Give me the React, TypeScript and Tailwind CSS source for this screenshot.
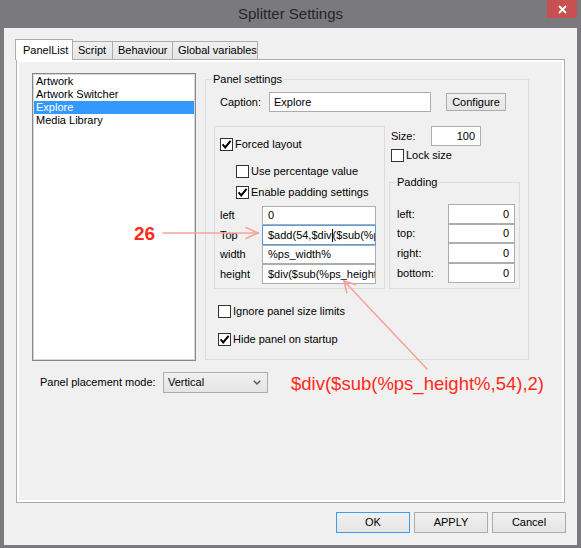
import React from "react";

function Check({ checked }: { checked?: boolean }) {
  return (
    <div className="w-[13px] h-[13px] border border-[#333333] bg-white flex items-center justify-center shrink-0">
      {checked && (
        <svg width="11" height="11" viewBox="0 0 11 11">
          <path d="M1.6 5.4 L4.2 8.4 L9.6 1.8" stroke="#000" strokeWidth="2" fill="none" />
        </svg>
      )}
    </div>
  );
}

function CheckRow({ checked, label, cls }: { checked?: boolean; label: string; cls: string }) {
  return (
    <div className={cls}>
      <Check checked={checked} />
      <span className="ml-[2px] whitespace-nowrap">{label}</span>
    </div>
  );
}

export default function App() {
  return (
    <div className="relative w-[581px] h-[548px] bg-[#7a797e] flex flex-col overflow-hidden font-['Liberation_Sans',Arial,sans-serif] text-[11px] leading-[13px] text-black">
      {/* title bar */}
      <div className="h-[28px] shrink-0 grid grid-cols-[1fr_auto_1fr]">
        <div />
        <div className="pt-[5px] text-[15px] leading-[17px] text-[#262626] whitespace-nowrap">Splitter Settings</div>
        <div className="flex justify-end items-start pr-[4px]">
          <div className="w-[30px] h-[18px] bg-[#c75050] flex items-center justify-center">
            <svg width="9" height="9" viewBox="0 0 9 9">
              <path d="M1 1 L8 8 M8 1 L1 8" stroke="#ffffff" strokeWidth="1.8" />
            </svg>
          </div>
        </div>
      </div>

      {/* client area */}
      <div className="mx-[4px] h-[517px] bg-[#f0f0f0] flex flex-col px-[11px]">
        {/* tabs */}
        <div className="mt-[11px] h-[20px] flex items-end relative z-10">
          <div className="w-[58px] h-[21px] -mb-[1px] bg-white border border-b-0 border-[#acacac] pl-[7px] flex items-center whitespace-nowrap">
            PanelList
          </div>
          <div className="w-[40px] h-[18px] bg-linear-to-b from-[#f0f0f0] to-[#e5e5e5] border-t border-r border-[#acacac] pl-[5px] flex items-center whitespace-nowrap">
            Script
          </div>
          <div className="w-[60px] h-[18px] bg-linear-to-b from-[#f0f0f0] to-[#e5e5e5] border-t border-r border-[#acacac] pl-[5px] flex items-center whitespace-nowrap">
            Behaviour
          </div>
          <div className="w-[85px] h-[18px] bg-linear-to-b from-[#f0f0f0] to-[#e5e5e5] border-t border-r border-[#acacac] pl-[5px] flex items-center whitespace-nowrap overflow-hidden">
            Global variables
          </div>
        </div>

        {/* tab panel */}
        <div className="mx-[1px] h-[444px] border border-[#acacac] bg-white p-[2px] flex">
          <div className="flex-1 bg-[#f0f0f0] pt-[11px] pl-[13px] flex flex-col">
            <div className="flex items-start">
              {/* list box */}
              <div className="w-[164px] h-[288px] border border-[#828790] bg-white p-[1px] shadow-[inset_0_0_0_1px_#d9d9d9] flex flex-col">
                <div className="h-[13px] pl-[2px]">Artwork</div>
                <div className="h-[13px] pl-[2px]">Artwork Switcher</div>
                <div className="h-[13px] pl-[2px] bg-[#3399ff] text-white">Explore</div>
                <div className="h-[13px] pl-[2px]">Media Library</div>
              </div>

              {/* Panel settings group */}
              <div className="ml-[9px] mt-[6px] w-[324px] h-[281px] border border-[#dcdcdc] flex flex-col">
                <div className="-mt-[7px] ml-[6px] px-[1px] bg-[#f0f0f0] w-fit">Panel settings</div>

                <div className="mt-[6px] h-[20px] flex items-center">
                  <div className="ml-[14px] w-[49px]">Caption:</div>
                  <div className="w-[162px] h-[20px] border border-[#abadb3] bg-white pl-[4px] flex items-center">Explore</div>
                  <div className="ml-[15px] w-[60px] h-[18px] border border-[#acacac] bg-linear-to-b from-[#f0f0f0] to-[#e5e5e5] flex items-center justify-center">
                    Configure
                  </div>
                </div>

                <div className="mt-[14px] ml-[8px] flex items-start">
                  {/* left box */}
                  <div className="w-[171px] h-[163px] border border-[#dcdcdc] flex flex-col pl-[5px] pt-[11px]">
                    <CheckRow checked label="Forced layout" cls="flex items-center h-[13px]" />
                    <CheckRow label="Use percentage value" cls="mt-[14px] ml-[16px] flex items-center h-[13px]" />
                    <CheckRow checked label="Enable padding settings" cls="mt-[8px] ml-[16px] flex items-center h-[13px]" />
                    <div className="mt-[7px] grid grid-cols-[42px_114px]">
                      <div className="h-[19px] flex items-center">left</div>
                      <div className="h-[19px] border border-[#abadb3] bg-white pl-[5px] flex items-center">0</div>
                      <div className="h-[20px] flex items-center">Top</div>
                      <div className="h-[20px] border border-[#569de5] bg-white pl-[5px] flex items-center overflow-hidden whitespace-nowrap">
                        <span>$add(54,$div</span>
                        <span className="inline-block w-px h-[13px] bg-black shrink-0" />
                        <span>($sub(%ps_height%,54),2))</span>
                      </div>
                      <div className="h-[19px] flex items-center">width</div>
                      <div className="h-[19px] border border-[#abadb3] bg-white pl-[5px] flex items-center whitespace-nowrap overflow-hidden">%ps_width%</div>
                      <div className="h-[20px] flex items-center">height</div>
                      <div className="h-[20px] border border-[#abadb3] bg-white pl-[5px] flex items-center overflow-hidden whitespace-nowrap">
                        $div($sub(%ps_height%,54),2)
                      </div>
                    </div>
                  </div>

                  {/* right column */}
                  <div className="ml-[4px] w-[131px] flex flex-col">
                    <div className="h-[20px] pl-[2px] flex items-center">
                      <div className="w-[40px]">Size:</div>
                      <div className="w-[50px] h-[20px] border border-[#abadb3] bg-white pr-[5px] flex items-center justify-end">100</div>
                    </div>
                    <CheckRow label="Lock size" cls="mt-[3px] pl-[2px] flex items-center h-[13px]" />
                    <div className="mt-[20px] w-[131px] h-[107px] border border-[#dcdcdc] flex flex-col">
                      <div className="-mt-[7px] ml-[6px] px-[1px] bg-[#f0f0f0] w-fit">Padding</div>
                      <div className="mt-[15px] pl-[7px] grid grid-cols-[51px_67px]">
                        <div className="h-[20px] flex items-center">left:</div>
                        <div className="h-[20px] border border-[#abadb3] bg-white pr-[5px] flex items-center justify-end">0</div>
                        <div className="h-[19px] flex items-center">top:</div>
                        <div className="h-[19px] border border-[#abadb3] bg-white pr-[5px] flex items-center justify-end">0</div>
                        <div className="h-[20px] flex items-center">right:</div>
                        <div className="h-[20px] border border-[#abadb3] bg-white pr-[5px] flex items-center justify-end">0</div>
                        <div className="h-[20px] flex items-center">bottom:</div>
                        <div className="h-[20px] border border-[#abadb3] bg-white pr-[5px] flex items-center justify-end">0</div>
                      </div>
                    </div>
                  </div>
                </div>

                <CheckRow label="Ignore panel size limits" cls="mt-[16px] ml-[12px] flex items-center h-[13px]" />
                <CheckRow checked label="Hide panel on startup" cls="mt-[15px] ml-[12px] flex items-center h-[13px]" />
              </div>
            </div>

            {/* placement mode */}
            <div className="mt-[11px] flex items-center">
              <div className="ml-[8px] w-[123px] whitespace-nowrap">Panel placement mode:</div>
              <div className="w-[105px] h-[21px] border border-[#acacac] bg-linear-to-b from-[#f0f0f0] to-[#e5e5e5] pl-[4px] pr-[6px] flex items-center justify-between">
                <span>Vertical</span>
                <svg width="8" height="5" viewBox="0 0 8 5">
                  <path d="M0.8 0.8 L4 4 L7.2 0.8" stroke="#555" strokeWidth="1.4" fill="none" />
                </svg>
              </div>
            </div>
          </div>
        </div>

        {/* buttons */}
        <div className="mt-[9px] flex justify-end gap-[4px]">
          <div className="w-[74px] h-[21px] border border-[#3c9ef0] bg-linear-to-b from-[#f0f0f0] to-[#e5e5e5] flex items-center justify-center">OK</div>
          <div className="w-[74px] h-[21px] border border-[#acacac] bg-linear-to-b from-[#f0f0f0] to-[#e5e5e5] flex items-center justify-center">APPLY</div>
          <div className="w-[74px] h-[21px] border border-[#acacac] bg-linear-to-b from-[#f0f0f0] to-[#e5e5e5] flex items-center justify-center">Cancel</div>
        </div>
      </div>

      {/* annotations overlay */}
      <svg className="absolute left-0 top-0 pointer-events-none" width="581" height="548" viewBox="0 0 581 548">
        <g stroke="#f6a49b" strokeWidth="1.6" fill="none" strokeLinecap="round">
          <path d="M163 233 L258 233" />
          <path d="M246 227.5 L258 233 L246 238.5" />
          <path d="M427 369 L344 281" />
          <path d="M346.8 292.7 L344 281 L355.5 284.4" />
        </g>
      </svg>
      <div className="absolute left-[134px] top-[224px] text-[19px] leading-[19px] font-bold text-[#ff2a1a]">26</div>
      <div className="absolute left-[291px] top-[375px] text-[18.5px] leading-[18.5px] text-[#ff2a1a] whitespace-nowrap">
        $div($sub(%ps_height%,54),2)
      </div>
    </div>
  );
}
